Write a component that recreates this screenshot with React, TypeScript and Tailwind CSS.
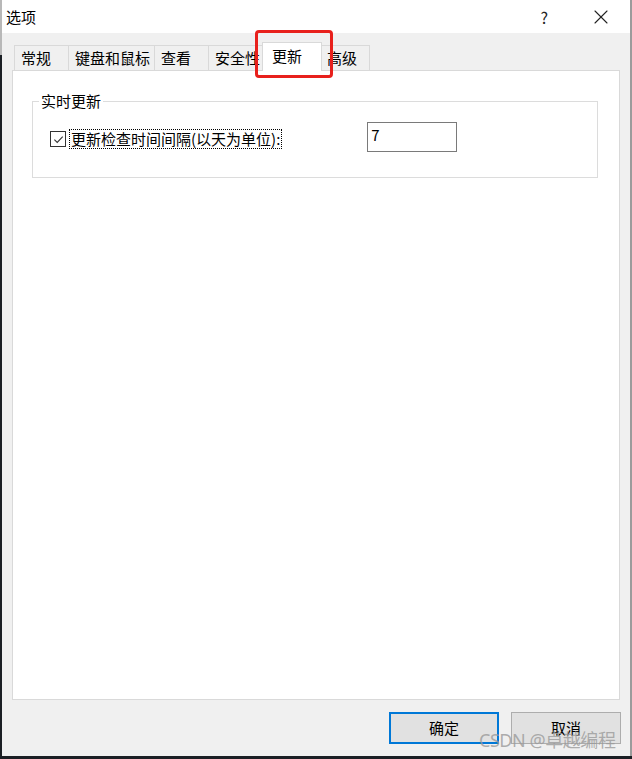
import { X } from 'lucide-react';

const font = { fontFamily: '"Noto Sans CJK SC", "Microsoft YaHei", sans-serif' };

type Tab = { label: string; w: string; active?: boolean };

const tabs: Tab[] = [
    { label: '常规', w: 'w-[54px]' },
    { label: '键盘和鼠标', w: 'w-[86px]' },
    { label: '查看', w: 'w-[54px]' },
    { label: '安全性', w: 'w-[56px]' },
    { label: '更新', w: 'w-[60px]', active: true },
    { label: '高级', w: 'w-[50px]' },
];

export default function App() {
    return (
        <div className="flex h-[759px] w-[632px] flex-col text-[15px] text-black" style={font}>
            <div className="flex flex-1">
                {/* desktop peeking out on the left */}
                <div className="flex w-[2px] flex-col">
                    <div className="h-[55px] bg-[#b8b8b8]" />
                    <div className="flex-1 bg-[#1b1f24]" />
                </div>

                <div className="relative flex flex-1 flex-col border-r-2 border-[#9b9b9b] bg-[#f0f0f0]">
                    {/* title bar */}
                    <div className="flex h-[33px] items-center bg-white pl-[4px]">
                        <span className="leading-none">选项</span>
                        <span className="ml-auto mr-[41px] text-[16px] leading-none text-[#222]">?</span>
                        <X className="mr-[17px] h-[24px] w-[24px] text-[#222]" strokeWidth={1.1} />
                    </div>

                    {/* tab strip */}
                    <div className="flex h-[37px] items-end pl-[12px]">
                        {tabs.map((t) =>
                            t.active ? (
                                <div
                                    key={t.label}
                                    className={`${t.w} relative z-10 -mx-[2px] -mb-px flex h-[29px] items-start border border-b-0 border-[#d9d9d9] bg-white pl-[9px] pt-[2px]`}
                                >
                                    {t.label}
                                </div>
                            ) : (
                                <div
                                    key={t.label}
                                    className={`${t.w} flex h-[25px] items-start border border-b-0 border-r-0 border-[#d9d9d9] bg-[#f0f0f0] pl-[6px] pt-[1px] last:border-r`}
                                >
                                    {t.label}
                                </div>
                            )
                        )}
                    </div>

                    {/* page */}
                    <div className="mx-[10px] flex h-[630px] flex-col border border-[#d9d9d9] bg-white pl-[19px] pr-[21px] pt-[30px]">
                        <div className="relative h-[77px] border border-[#dcdcdc]">
                            <span className="absolute -top-[12px] left-[6px] bg-white px-[2px] leading-[22px]">实时更新</span>
                            <div className="flex items-center pl-[17px] pt-[24px]">
                                <div className="flex h-[16px] w-[16px] items-center justify-center border border-[#333] bg-white">
                                    <svg viewBox="0 0 12 12" className="h-[11px] w-[11px]">
                                        <path d="M1.5 6.2 L4.6 9.2 L10.6 2.8" fill="none" stroke="#333" strokeWidth="1.2" />
                                    </svg>
                                </div>
                                <span className="ml-[3px] border border-dotted border-black px-[1px] leading-[18px]">
                                    更新检查时间间隔(以天为单位):
                                </span>
                                <div className="ml-[85px] -mt-[4px] flex h-[30px] w-[90px] items-start border border-[#7a7a7a] bg-white pl-[3px] pt-[1px]">
                                    7
                                </div>
                            </div>
                        </div>
                    </div>

                    {/* buttons */}
                    <div className="flex justify-end gap-[12px] pr-[9px] pt-[12px]">
                        <button className="h-[32px] w-[110px] border-2 border-[#0078d7] bg-[#e1e1e1] text-[15px]">确定</button>
                        <button className="h-[32px] w-[110px] border border-[#adadad] bg-[#e1e1e1] text-[15px]">取消</button>
                    </div>

                    {/* red highlight drawn over the tab */}
                    <div className="pointer-events-none absolute left-[253px] top-[30px] h-[48px] w-[78px] rounded-[4px] border-[3px] border-[#e8201c]" />

                    {/* watermark */}
                    <span
                        className="pointer-events-none absolute left-[477px] top-[727px] text-[18px] tracking-tight text-[#9a9a9a]/80"
                        style={{ fontFamily: '"Noto Sans", "Noto Sans CJK SC", sans-serif' }}
                    >
                        CSDN @卓越编程
                    </span>
                </div>
            </div>
            <div className="h-[3px] bg-[#1b1f24]" />
        </div>
    );
}
